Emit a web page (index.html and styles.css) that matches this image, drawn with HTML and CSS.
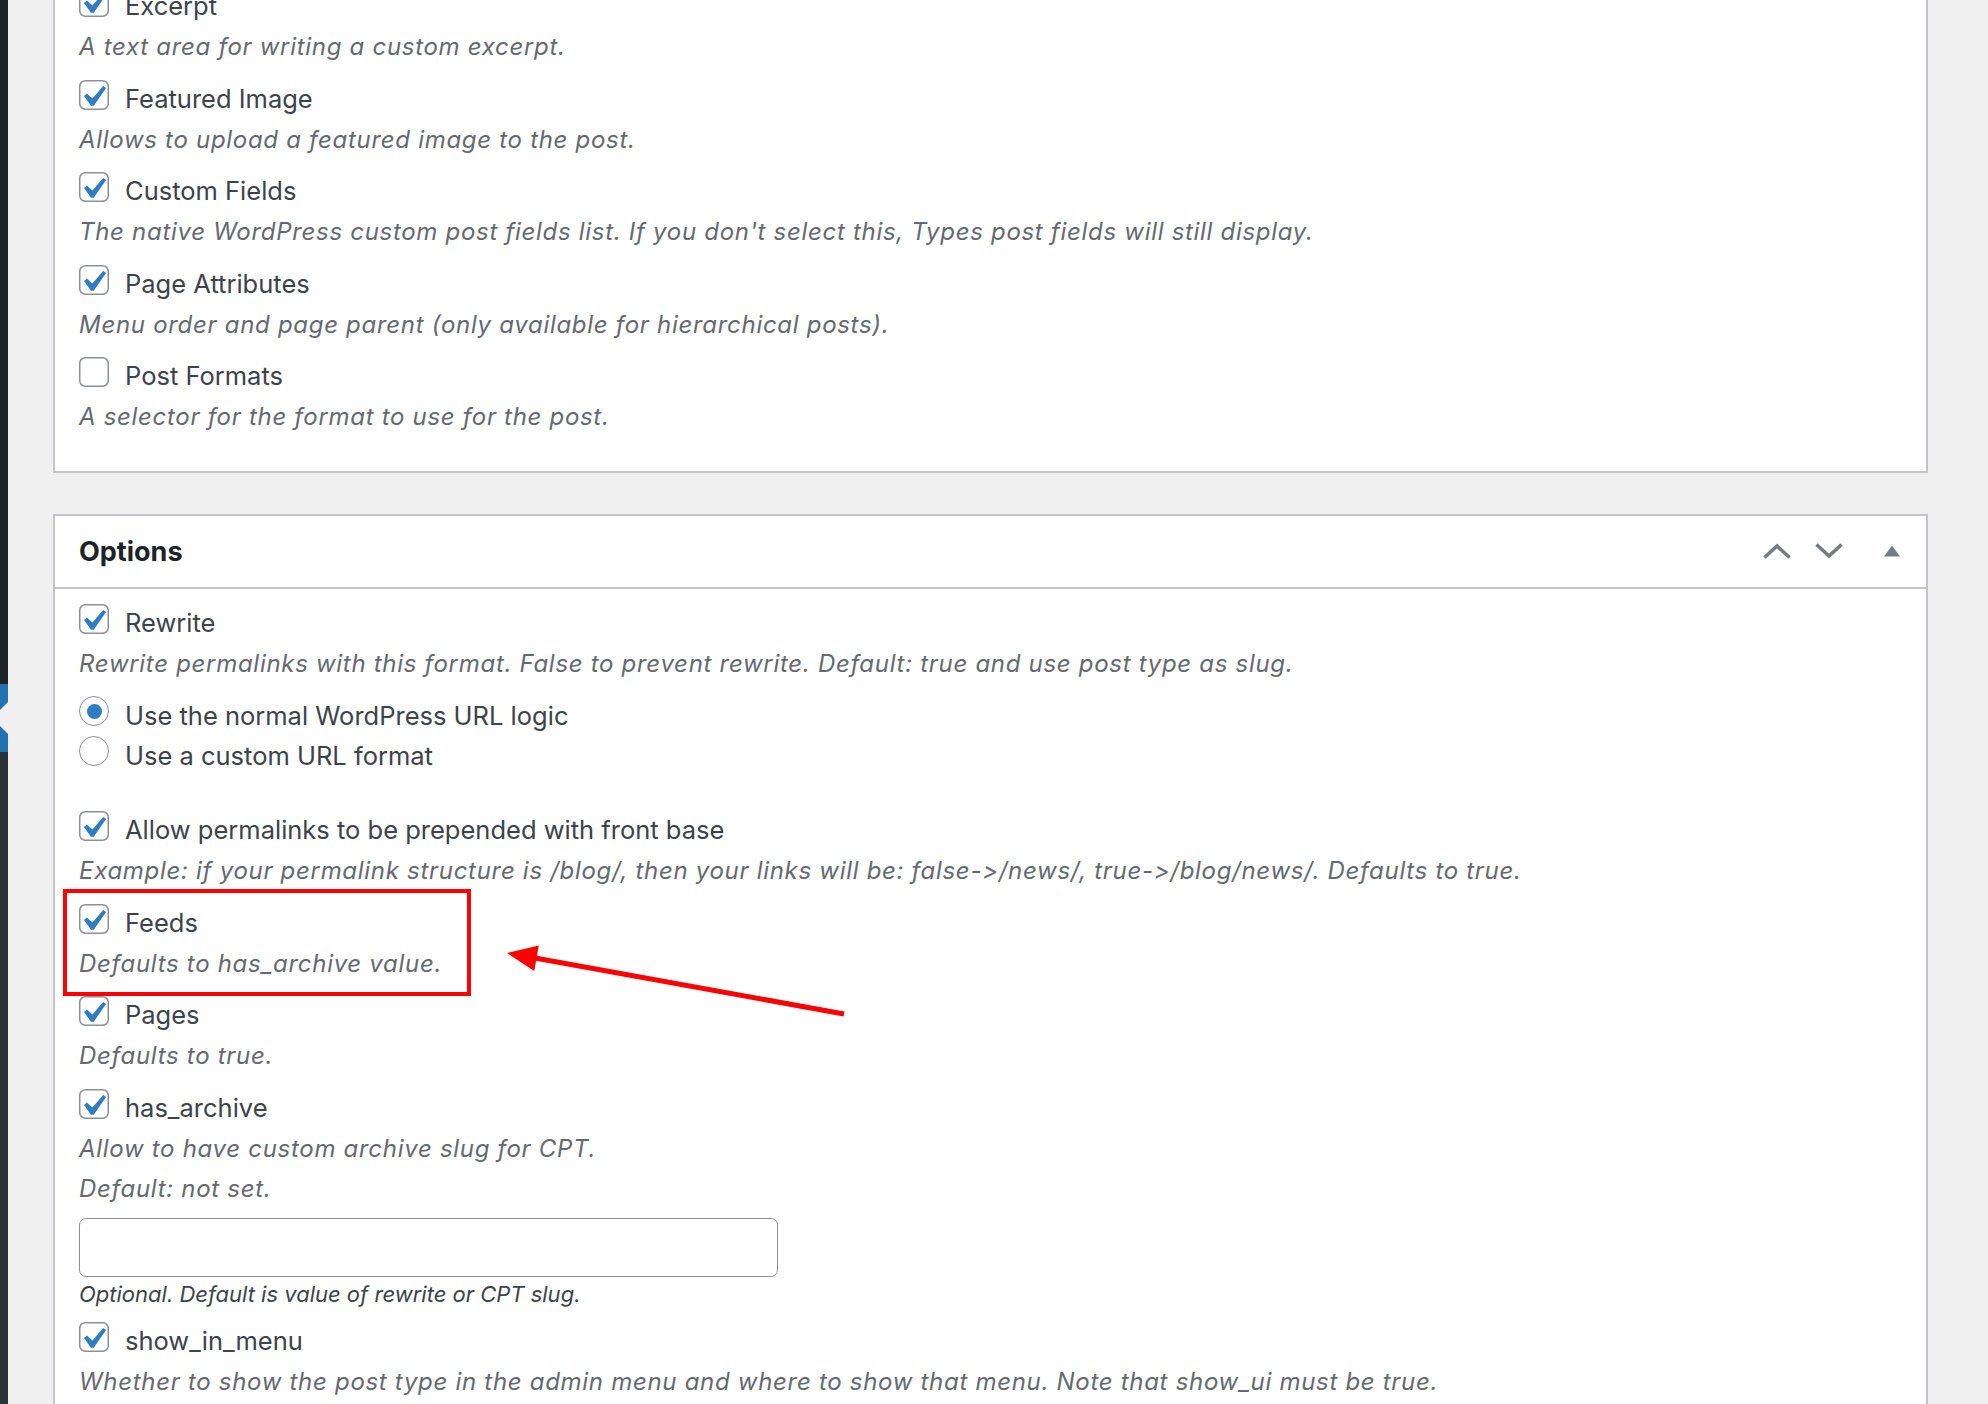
FILE: index.html
```html
<!DOCTYPE html>
<html>
  <head>
    <meta charset="utf-8">
    <link rel="stylesheet" href="styles.css">
    <title>Edit Post Type</title>
  </head>

  <body>
    <div class="adminmenu">
      <div class="menu-top"></div>
      <div class="menu-current"></div>
      <div class="menu-rest"></div>
    </div>

    <div class="content">
      <div class="postbox first">
        <div class="inside">
          <div class="field">
            <label class="check"><svg class="cb"><use href="#tick"/></svg><span>Excerpt</span></label>
            <p class="desc">A text area for writing a custom excerpt.</p>
          </div>
          <div class="field">
            <label class="check"><svg class="cb"><use href="#tick"/></svg><span>Featured Image</span></label>
            <p class="desc">Allows to upload a featured image to the post.</p>
          </div>
          <div class="field">
            <label class="check"><svg class="cb"><use href="#tick"/></svg><span>Custom Fields</span></label>
            <p class="desc">The native WordPress custom post fields list. If you don't select this, Types post fields will still display.</p>
          </div>
          <div class="field">
            <label class="check"><svg class="cb"><use href="#tick"/></svg><span>Page Attributes</span></label>
            <p class="desc">Menu order and page parent (only available for hierarchical posts).</p>
          </div>
          <div class="field">
            <label class="check"><svg class="cb"><use href="#blank"/></svg><span>Post Formats</span></label>
            <p class="desc">A selector for the format to use for the post.</p>
          </div>
        </div>
      </div>

      <div class="postbox">
        <div class="postbox-header">
          <h2>Options</h2>
          <div class="handle-actions">
            <button class="handle"><svg width="28" height="16" viewBox="0 0 28 16"><path d="M1.5 14.5 L14 3 L26.5 14.5" class="chev"/></svg></button>
            <button class="handle"><svg width="28" height="16" viewBox="0 0 28 16"><path d="M1.5 1.5 L14 13 L26.5 1.5" class="chev"/></svg></button>
            <button class="handle toggle"><svg width="16" height="12" viewBox="0 0 16 12"><polygon points="0,11.5 8,0.5 16,11.5" fill="#787c82"/></svg></button>
          </div>
        </div>
        <div class="inside">
          <div class="field">
            <label class="check"><svg class="cb"><use href="#tick"/></svg><span>Rewrite</span></label>
            <p class="desc">Rewrite permalinks with this format. False to prevent rewrite. Default: true and use post type as slug.</p>
          </div>
          <ul class="radios">
            <li><label class="check"><span class="radio on"></span><span>Use the normal WordPress URL logic</span></label></li>
            <li><label class="check"><span class="radio"></span><span>Use a custom URL format</span></label></li>
          </ul>
          <div class="field">
            <label class="check"><svg class="cb"><use href="#tick"/></svg><span>Allow permalinks to be prepended with front base</span></label>
            <p class="desc">Example: if your permalink structure is /blog/, then your links will be: false-&gt;/news/, true-&gt;/blog/news/. Defaults to true.</p>
          </div>
          <div class="field marked">
            <label class="check"><svg class="cb"><use href="#tick"/></svg><span>Feeds</span></label>
            <p class="desc">Defaults to has_archive value.</p>
            <div class="mark"></div>
            <svg class="arrow" width="360" height="100" viewBox="0 0 360 100">
              <line x1="36" y1="24" x2="345" y2="80" stroke="#ff0000" stroke-width="5"/>
              <polygon points="8,19 39.8,11.5 35.2,37.1" fill="#ff0000"/>
            </svg>
          </div>
          <div class="field">
            <label class="check"><svg class="cb"><use href="#tick"/></svg><span>Pages</span></label>
            <p class="desc">Defaults to true.</p>
          </div>
          <div class="field">
            <label class="check"><svg class="cb"><use href="#tick"/></svg><span>has_archive</span></label>
            <p class="desc">Allow to have custom archive slug for CPT.</p>
            <p class="desc second">Default: not set.</p>
            <input type="text" class="text-input">
            <p class="note">Optional. Default is value of rewrite or CPT slug.</p>
          </div>
          <div class="field">
            <label class="check"><svg class="cb"><use href="#tick"/></svg><span>show_in_menu</span></label>
            <p class="desc">Whether to show the post type in the admin menu and where to show that menu. Note that show_ui must be true.</p>
          </div>
        </div>
      </div>
    </div>

    <svg class="sprite">
      <symbol id="blank" viewBox="0 0 30 30">
        <rect x="0.75" y="0.75" width="28.5" height="28.5" rx="5.5" fill="#fff" stroke="#8c8f94" stroke-width="1.5"/>
      </symbol>
      <symbol id="tick" viewBox="0 0 30 30">
        <rect x="0.75" y="0.75" width="28.5" height="28.5" rx="5.5" fill="#fff" stroke="#8c8f94" stroke-width="1.5"/>
        <path transform="translate(-7.2 -4.4) scale(2.12)" d="M14.83 4.89l1.34.94-5.81 8.38H9.02L5.78 9.67l1.34-1.25 2.57 2.4z" fill="#2f7cc0"/>
      </symbol>
    </svg>
  </body>
</html>
```

FILE: styles.css
```css
body {margin:0; background:#f0f0f1; display:flex; min-height:1404px; overflow:hidden; font-family:"Inter", "Roboto", "Liberation Sans", sans-serif; font-feature-settings:"calt" 0, "liga" 0; font-variant-ligatures:none; color:#3c434a;}

.adminmenu {width:8px; flex:none; display:flex; flex-direction:column; overflow:hidden;}
.menu-top {height:684px; background:#1d2327;}
.menu-current {height:68px; background:#2271b1; position:relative;}
.menu-current::after {content:""; position:absolute; right:0; top:18px; border:16px solid transparent; border-right-color:#f0f0f1;}
.menu-rest {flex:1; background:#2c3338;}

.content {flex:1; padding:0 60px 0 45px;}

.postbox {background:#fff; border:2px solid #c3c4c7; margin-bottom:41px;}
.postbox.first {margin-top:-30px;}
.postbox-header {display:flex; align-items:center; justify-content:space-between; height:71px; border-bottom:2px solid #c3c4c7; padding:0 8px 0 24px;}
.postbox-header h2 {margin:0; font-size:27px; font-weight:700; color:#1d2327;}
.handle-actions {display:flex; align-items:center;}
.handle {width:52px; height:52px; border:0; background:none; padding:0; display:flex; align-items:center; justify-content:center;}
.toggle {margin-left:11px;}
.chev {fill:none; stroke:#787c82; stroke-width:3.6;}

.inside {padding:15px 24px 21px;}

.field {margin-bottom:16.5px;}
.check {display:flex; align-items:flex-start; gap:16px; font-size:25.5px; line-height:38px; color:#3c434a;}
.cb {width:30px; height:30px; flex:none;}
.desc {margin:6px 0 0; font-size:24px; line-height:32px; letter-spacing:0.7px; font-style:italic; color:#646970;}
.desc.second {margin-top:8px;}

.radios {list-style:none; margin:0 0 35px; padding:0;}
.radios .check {line-height:40px;}
.radio {width:30px; height:30px; flex:none; box-sizing:border-box; border:1.5px solid #8c8f94; border-radius:50%; background:#fff; display:flex; align-items:center; justify-content:center;}
.radio.on::before {content:""; width:15px; height:15px; border-radius:50%; background:#2f7cc0;}

.text-input {display:block; width:699px; height:59px; box-sizing:border-box; margin-top:13px; border:1.5px solid #8c8f94; border-radius:7px; background:#fff;}
.note {margin:5px 0 0; font-size:22px; line-height:24px; font-style:italic; color:#3c434a;}

.marked {position:relative;}
.mark {position:absolute; left:-16px; top:-15px; width:408px; height:107px; box-sizing:border-box; border:4px solid #ff0000;}
.arrow {position:absolute; left:420px; top:30px; overflow:visible;}

.sprite {width:0; height:0; overflow:hidden; flex:none;}
```
